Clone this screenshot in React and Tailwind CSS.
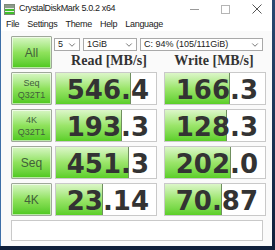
import { ChevronDown } from 'lucide-react';

const rows = [
  { label: ['Seq', 'Q32T1'], read: '546.4', write: '166.3' },
  { label: ['4K', 'Q32T1'], read: '193.3', write: '128.3' },
  { label: ['Seq'], read: '451.3', write: '202.0' },
  { label: ['4K'], read: '23.14', write: '70.87' },
];

// bars are drawn on a log scale
const barWidth = (v) => Math.round(19.2 + 20.4 * Math.log10(parseFloat(v)));

const font = { fontFamily: '"Liberation Sans", Arial, sans-serif' };

const Select = ({ value, className }) => (
  <div className={`h-[13px] bg-white border border-[#a9a9a9] flex items-center justify-between pl-[3px] pr-[2px] text-[9px] text-[#222] ${className}`}>
    <span className="leading-none">{value}</span>
    <ChevronDown size={10} strokeWidth={1.6} color="#333" />
  </div>
);

const LabelButton = ({ lines, big }) => (
  <div className="w-[41px] h-full shrink-0 border border-[#9fa89a] rounded-[1px] bg-gradient-to-b from-[#d8f6c4] via-[#8fe25c] to-[#4cc81a] shadow-[inset_0_0_0_1px_rgba(255,255,255,0.6)] flex flex-col items-center justify-center text-[#41613a] leading-[12px]">
    {lines.map((l) => (
      <span key={l} className={big ? 'text-[12px]' : 'text-[9px]'}>{l}</span>
    ))}
  </div>
);

const ValueCell = ({ value }) => (
  <div className="relative w-[102px] h-full shrink-0 bg-white border border-[#c9c9c9] overflow-hidden">
    <div
      className="absolute left-0 top-0 bottom-0 bg-gradient-to-b from-[#dcf6c8] via-[#9be56a] to-[#5bcf26] border-r border-[#6f8f5f]"
      style={{ width: barWidth(value) }}
    />
    <div
      className="relative h-full flex items-center justify-end pr-[7px] pt-[3px] text-[26px] font-bold text-[#333] leading-none"
      style={{ fontFamily: '"DejaVu Sans", Verdana, sans-serif' }}
    >
      {value}
    </div>
  </div>
);

const AppIcon = () => (
  <svg width="11" height="11" viewBox="0 0 11 11">
    <rect x="0.5" y="0.5" width="10" height="10" fill="#e9ece8" stroke="#7b8a78" />
    <rect x="1" y="1" width="9" height="3" fill="#8c9a8a" />
    <rect x="1" y="5" width="9" height="2" fill="#3fbf2a" />
    <rect x="1" y="8" width="9" height="2" fill="#3fbf2a" />
  </svg>
);

export default function App() {
  return (
    <div className="w-[275px] h-[250px] bg-gradient-to-b from-[#2a4a72] to-[#0f1f3a] overflow-hidden" style={font}>
      <div className="w-[272px] h-[246px] bg-[#fafafa] border-l border-[#3d6fa8] flex flex-col">
        {/* title bar */}
        <div className="h-[18px] bg-white flex items-center pl-[3px] shrink-0">
          <AppIcon />
          <span className="ml-[4px] text-[9px] tracking-[-0.35px] text-[#222]">CrystalDiskMark 5.0.2 x64</span>
          <div className="ml-auto flex items-center h-full">
            <div className="w-[31px] flex justify-center">
              <div className="w-[9px] h-px bg-[#9a9a9a]" />
            </div>
            <div className="w-[31px] flex justify-center">
              <div className="w-[9px] h-[9px] border border-[#b5b5b5]" />
            </div>
            <div className="w-[31px] flex justify-center">
              <svg width="10" height="10" viewBox="0 0 10 10">
                <path d="M0.5 0.5 L9.5 9.5 M9.5 0.5 L0.5 9.5" stroke="#555" strokeWidth="1" />
              </svg>
            </div>
          </div>
        </div>

        {/* menu */}
        <div className="h-[13px] bg-white flex items-center text-[9px] tracking-[-0.3px] text-[#222] pl-[5px] gap-[8px] shrink-0">
          <span>File</span>
          <span>Settings</span>
          <span>Theme</span>
          <span>Help</span>
          <span>Language</span>
        </div>

        {/* content */}
        <div className="flex flex-col pl-[10px] pt-[5px]">
          <div className="flex h-[33px]">
            <div className="w-[41px] h-full shrink-0 border border-[#9fa89a] rounded-[1px] bg-gradient-to-b from-[#d8f6c4] via-[#8fe25c] to-[#4cc81a] shadow-[inset_0_0_0_1px_rgba(255,255,255,0.6)] flex items-center justify-center text-[12px] text-[#41613a]">
              All
            </div>
            <div className="flex flex-col ml-[2px]">
              <div className="flex mt-[2px] gap-[3px]">
                <Select value="5" className="w-[26px]" />
                <Select value="1GiB" className="w-[54px]" />
                <Select value="C: 94% (105/111GiB)" className="w-[123px]" />
              </div>
              <div
                className="flex mt-[2px] text-[14px] font-bold text-[#333] leading-[16px]"
                style={{ fontFamily: '"Liberation Serif", "Times New Roman", serif' }}
              >
                <div className="w-[106px] text-center pl-[4px]">Read [MB/s]</div>
                <div className="w-[104px] text-center pl-[4px]">Write [MB/s]</div>
              </div>
            </div>
          </div>

          <div className="flex flex-col gap-[4px] mt-[3px]">
            {rows.map((r, i) => (
              <div key={i} className="flex h-[33px] gap-[3px]">
                <LabelButton lines={r.label} big={r.label.length === 1} />
                <ValueCell value={r.read} />
                <div className="w-px" />
                <ValueCell value={r.write} />
              </div>
            ))}
          </div>

          {/* status bar */}
          <div className="mt-[4px] w-[252px] h-[21px] bg-white border border-[#c9c9c9]" />
        </div>
      </div>
    </div>
  );
}
